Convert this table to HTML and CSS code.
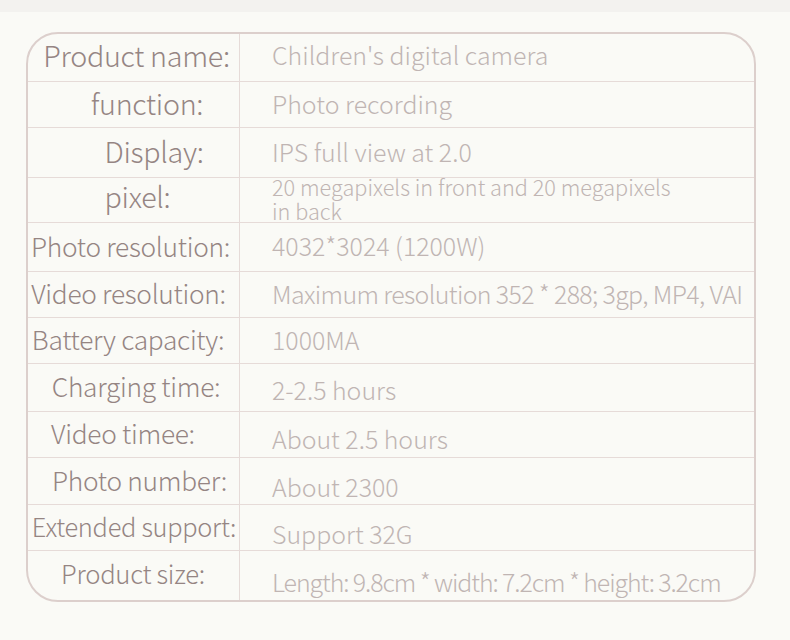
FILE: index.html
```html
<!DOCTYPE html>
<html>
<head>
<meta charset="utf-8">
<link rel="stylesheet" href="styles.css">
</head>
<body>
<div class="strip"></div>
<div class="spec">
  <div class="label big l1">Product name:</div><div class="value first">Children's digital camera</div>
  <div class="label big l2">function:</div><div class="value">Photo recording</div>
  <div class="label big l3">Display:</div><div class="value">IPS full view at 2.0</div>
  <div class="label big l4">pixel:</div><div class="value small">20 megapixels in front and 20 megapixels<br>in back</div>
  <div class="label l5">Photo resolution:</div><div class="value">4032*3024 (1200W)</div>
  <div class="label l6">Video resolution:</div><div class="value tight">Maximum resolution 352 * 288; 3gp, MP4, VAI</div>
  <div class="label l7">Battery capacity:</div><div class="value">1000MA</div>
  <div class="label l8">Charging time:</div><div class="value d1">2-2.5 hours</div>
  <div class="label l9">Video timee:</div><div class="value d2">About 2.5 hours</div>
  <div class="label l10">Photo number:</div><div class="value d3">About 2300</div>
  <div class="label l11">Extended support:</div><div class="value d4">Support 32G</div>
  <div class="label l12 last">Product size:</div><div class="value d4 tighter last">Length: 9.8cm * width: 7.2cm * height: 3.2cm</div>
</div>
</body>
</html>
```
FILE: styles.css
```css
* { box-sizing: border-box; }
html, body { margin: 0; padding: 0; }
body {
  width: 790px;
  height: 640px;
  background: #fafaf6;
  font-family: "Noto Sans CJK SC", "Source Sans Pro", sans-serif;
  font-weight: 300;
  overflow: hidden;
}
.strip {
  height: 12px;
  background: #f3f2ef;
}
.spec {
  margin: 20px 0 0 26px;
  width: 730px;
  border: 2px solid #dccfcc;
  border-radius: 32px;
  overflow: hidden;
  display: grid;
  grid-template-columns: 212px 1fr;
  grid-template-rows: 48px 46px 50px 45px 49px 46px 46px 48px 46px 47px 46px 49px;
}
.label, .value {
  border-bottom: 1px solid #e6dbd8;
  display: flex;
  align-items: center;
  white-space: nowrap;
  padding-bottom: 4px;
}
.last { border-bottom: none; }
.label {
  border-right: 1px solid #e6dbd8;
  color: #958583;
  font-size: 26.3px;
  letter-spacing: -0.3px;
  justify-content: center;
}
.label.big { font-size: 28.7px; }
.value {
  color: #c0b5b3;
  font-size: 24.9px;
  padding-left: 32px;
}
.value.first { padding-bottom: 7px; }
.value.tight { letter-spacing: -0.63px; }
.value.tighter { letter-spacing: -1.08px; }
.value.small {
  font-size: 21.7px;
  line-height: 24px;
  padding-top: 0;
  padding-bottom: 2px;
}
.l1 { padding-left: 6px; padding-bottom: 6px; }
.l2 { padding-left: 27px; }
.l3 { padding-left: 41px; }
.l4 { padding-left: 8px; padding-bottom: 9px; }
.l5 { padding-right: 6px; }
.l6 { padding-right: 10px; }
.l7 { padding-right: 11px; }
.l8 { padding-left: 5px; }
.l9 { padding-right: 21px; }
.l10 { padding-left: 12px; }
.l11 { font-size: 25.4px; padding-left: 1px; }
.l12 { padding-right: 1px; padding-bottom: 6px; font-size: 25.7px; }
.d1 { padding-top: 6px; }
.d2 { padding-top: 10px; }
.d3 { padding-top: 13px; }
.d4 { padding-top: 14px; }
```
